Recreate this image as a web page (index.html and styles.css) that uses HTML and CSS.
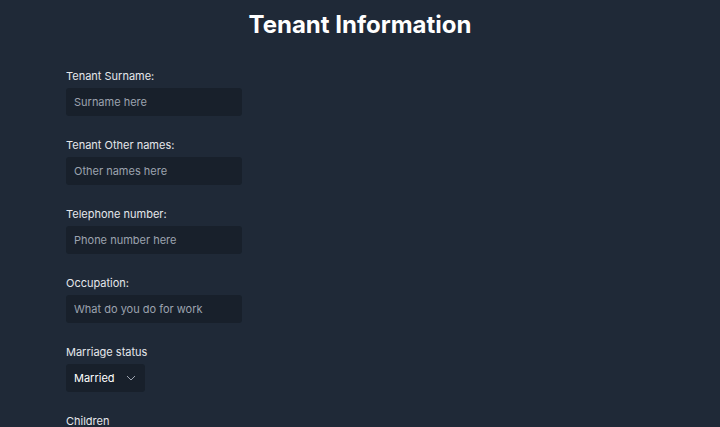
FILE: index.html
```html
<!DOCTYPE html>
<html>
<head>
<meta charset="utf-8">
<link rel="stylesheet" href="styles.css">
</head>
<body>
<h1 class="title">Tenant Information</h1>
<form class="form">
  <div class="field">
    <label class="label">Tenant Surname:</label>
    <input class="input" type="text" placeholder="Surname here">
  </div>
  <div class="field">
    <label class="label">Tenant Other names:</label>
    <input class="input" type="text" placeholder="Other names here">
  </div>
  <div class="field">
    <label class="label">Telephone number:</label>
    <input class="input" type="text" placeholder="Phone number here">
  </div>
  <div class="field">
    <label class="label">Occupation:</label>
    <input class="input" type="text" placeholder="What do you do for work">
  </div>
  <div class="field">
    <label class="label">Marriage status</label>
    <div class="select">
      <span>Married</span>
      <svg class="chev" width="10" height="6" viewBox="0 0 10 6"><path d="M1 1l4 4 4-4" fill="none" stroke="#9ca3af" stroke-width="1"/></svg>
    </div>
  </div>
  <div class="field">
    <label class="label">Children</label>
  </div>
</form>
</body>
</html>
```
FILE: styles.css
```css
html, body {
  margin: 0;
  padding: 0;
  background: #1f2937;
  font-family: Inter, "Liberation Sans", sans-serif;
  height: 100%;
  overflow: hidden;
}
.title {
  margin: 0;
  padding-top: 9px;
  text-align: center;
  color: #ffffff;
  font-size: 24px;
  line-height: 32px;
  font-weight: 700;
}
.form {
  padding: 29px 0 0 66px;
  display: flex;
  flex-direction: column;
  gap: 23px;
}
.field {
  display: flex;
  flex-direction: column;
  align-items: flex-start;
  gap: 5px;
}
.label {
  color: #e5e7eb;
  font-size: 11px;
  line-height: 13px;
}
.input {
  box-sizing: border-box;
  width: 176px;
  height: 28px;
  border: none;
  border-radius: 3px;
  background: #18202b;
  color: #e5e7eb;
  font-family: Inter, "Liberation Sans", sans-serif;
  font-size: 11px;
  padding: 0 8px;
  outline: none;
}
.input::placeholder {
  color: #9ca3af;
}
.select {
  box-sizing: border-box;
  width: 79px;
  height: 28px;
  border-radius: 3px;
  background: #18202b;
  color: #ffffff;
  font-size: 11px;
  display: flex;
  align-items: center;
  justify-content: space-between;
  padding: 0 9px 0 8px;
}
.chev {
  display: block;
}
```
